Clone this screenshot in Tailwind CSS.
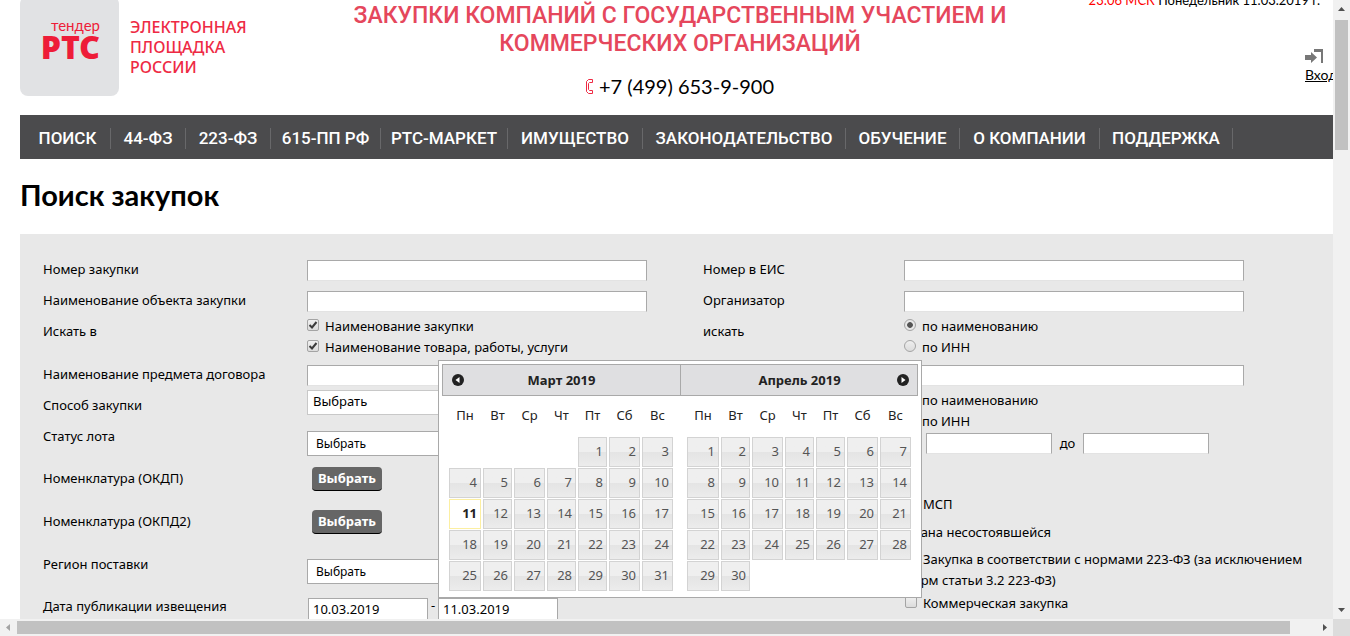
<!DOCTYPE html>
<html lang="ru">
<head>
<meta charset="utf-8">
<title>Поиск закупок</title>
<script src="https://cdn.jsdelivr.net/npm/@tailwindcss/browser@4"></script>
</head>
<body class="flex h-screen flex-col overflow-hidden bg-white font-['Noto_Sans',sans-serif] text-[13px] leading-[21px] text-black">
<div class="flex min-h-0 flex-1">
  <div class="min-w-0 flex-1 overflow-hidden">
    <div class="relative min-w-[1360px] px-5">
      <header class="flex h-[115px] justify-between">
        <a href="#" class="flex w-[300px] gap-[11px]">
          <span class="-mt-1 flex h-[100px] w-[99px] flex-col rounded-lg bg-[#e1e2e4] pt-5 pr-[19px] text-right text-[#ee1c38]">
            <span class="font-['Lato',sans-serif] text-[15px] leading-[18px]">тендер</span>
            <span class="font-['Noto_Sans',sans-serif] text-[32px] leading-[26px] font-black">РТС</span>
          </span>
          <span class="pt-[17px] text-[16px] leading-5 font-medium text-[#ee2a44]">ЭЛЕКТРОННАЯ<br>ПЛОЩАДКА<br>РОССИИ</span>
        </a>
        <div class="min-w-0 flex-1 text-center font-['Lato',sans-serif]">
          <h2 class="pt-0.5 font-['Roboto',sans-serif] text-[23px] leading-7 font-medium text-[#e5475c]">ЗАКУПКИ КОМПАНИЙ С ГОСУДАРСТВЕННЫМ УЧАСТИЕМ И<br>КОММЕРЧЕСКИХ ОРГАНИЗАЦИЙ</h2>
          <p class="flex items-center justify-center gap-1.5 pt-3.5 text-[20px] leading-7">
            <svg class="h-[15px] w-[7px]" viewBox="0 0 7 15" fill="none" stroke="#ee2a44"><path d="M2.5 .5h4v3h-3l-1 1v6l1 1h3v3h-4l-2-2v-10z"/></svg>+7 (499) 653-9-900</p>
        </div>
        <div class="-mt-2.5 w-[300px] font-['Lato',sans-serif]">
          <p class="pr-5 text-right text-[13px] leading-[21px]"><span class="text-[#f00]">23:06 МСК</span> Понедельник 11.03.2019 г.</p>
          <a href="#" class="ml-auto block w-[35px] pt-[38px] text-[14px] leading-5 underline">
            <svg class="mb-px h-[15px] w-[19px]" viewBox="0 0 19 15"><path d="M9 0h9v14h-2V3H9zM0 6h6V3l6 5.500-6 5.500v-3H0z" fill="#777"/></svg>
            Вход</a>
        </div>
      </header>
      <nav class="flex h-11 items-center bg-[#4b4b4d] pt-0.5 pl-[5px] text-center font-['Roboto',sans-serif] text-[17px] font-medium text-white *:border-r *:border-[#68686a]">
        <a href="#" class="w-[86px]">ПОИСК</a><a href="#" class="w-[75px]">44-ФЗ</a><a href="#" class="w-[85px]">223-ФЗ</a><a href="#" class="w-[110px]">615-ПП РФ</a><a href="#" class="w-[127px]">РТС-МАРКЕТ</a><a href="#" class="w-[135px]">ИМУЩЕСТВО</a><a href="#" class="w-[203px]">ЗАКОНОДАТЕЛЬСТВО</a><a href="#" class="w-[114px]">ОБУЧЕНИЕ</a><a href="#" class="w-[140px]">О КОМПАНИИ</a><a href="#" class="w-[133px]">ПОДДЕРЖКА</a>
      </nav>
      <h1 class="h-[75px] pt-[18px] font-['Lato',sans-serif] text-[29px] leading-9 font-bold">Поиск закупок</h1>

      <form class="flex bg-[#e8e8e8] pt-5 pl-[23px]">
        <div class="w-[660px] *:flex [&>*>:first-child]:w-[264px] [&>*>:first-child]:pt-[5px]">
          <div class="h-[31px]"><label for="num">Номер закупки</label><input id="num" type="text" class="mt-1.5 h-[21px] w-[340px] border border-[#a9a9a9] border-b-[#e3e3e3] bg-white px-1 outline-none"></div>
          <div class="h-[31px]"><label for="obj">Наименование объекта закупки</label><input id="obj" type="text" class="mt-1.5 h-[21px] w-[340px] border border-[#a9a9a9] border-b-[#e3e3e3] bg-white px-1 outline-none"></div>
          <div class="h-[43px]"><span>Искать в</span>
            <div>
              <label class="flex gap-1.5"><span class="relative mt-[3px] size-3"><input type="checkbox" checked class="block size-3 appearance-none rounded-xs border border-[#a4a4a4] bg-linear-to-b from-[#f0f0f0] to-[#dcdcdc]"><svg class="pointer-events-none absolute inset-0 size-3" viewBox="0 0 12 12" fill="none" stroke="#3c3c3c" stroke-width="2"><path d="M2.500 6l2.500 2.500L9.500 3"/></svg></span>Наименование закупки</label>
              <label class="flex gap-1.5"><span class="relative mt-[3px] size-3"><input type="checkbox" checked class="block size-3 appearance-none rounded-xs border border-[#a4a4a4] bg-linear-to-b from-[#f0f0f0] to-[#dcdcdc]"><svg class="pointer-events-none absolute inset-0 size-3" viewBox="0 0 12 12" fill="none" stroke="#3c3c3c" stroke-width="2"><path d="M2.500 6l2.500 2.500L9.500 3"/></svg></span>Наименование товара, работы, услуги</label>
            </div>
          </div>
          <div class="h-[31px]"><label for="subj">Наименование предмета договора</label><input id="subj" type="text" class="mt-1.5 h-[21px] w-[340px] border border-[#a9a9a9] border-b-[#e3e3e3] bg-white px-1 outline-none"></div>
          <div class="h-[31px]"><label for="way">Способ закупки</label><select id="way" class="h-[25px] w-[340px] appearance-none border border-[#c8c8c8] bg-white px-[5px] pb-0.5 leading-[21px] outline-none"><option>Выбрать</option></select></div>
          <div class="h-[42px]"><label for="status">Статус лота</label><select id="status" class="mt-2.5 h-[25px] w-[340px] appearance-none border border-[#a9a9a9] bg-white px-2 text-[12px] outline-none"><option>Выбрать</option></select></div>
          <div class="h-[43px]"><span>Номенклатура (ОКДП)</span><button type="button" class="mt-1 ml-[5px] h-6 w-[70px] rounded-sm border-b border-black bg-[#666] font-bold text-white">Выбрать</button></div>
          <div class="h-[43px]"><span>Номенклатура (ОКПД2)</span><button type="button" class="mt-1 ml-[5px] h-6 w-[70px] rounded-sm border-b border-black bg-[#666] font-bold text-white">Выбрать</button></div>
          <div class="h-[42px]"><label for="region">Регион поставки</label><select id="region" class="mt-2.5 h-[25px] w-[340px] appearance-none border border-[#a9a9a9] bg-white px-2 text-[12px] outline-none"><option>Выбрать</option></select></div>
          <div class="h-[42px]"><label for="from">Дата публикации извещения</label><input id="from" type="text" value="10.03.2019" class="mt-[7px] ml-px h-[22px] w-[120px] border border-[#a9a9a9] border-b-[#e3e3e3] bg-white px-1 outline-none"><span class="w-2.5 pt-1 text-center">-</span><input aria-label="Дата публикации по" type="text" value="11.03.2019" class="mt-[7px] h-[22px] w-[120px] border border-[#a9a9a9] border-b-[#e3e3e3] bg-white px-1 outline-none"></div>
        </div>

        <div class="min-w-0 flex-1">
          <div class="flex h-[31px]"><label for="eis" class="w-[201px] pt-[5px]">Номер в ЕИС</label><input id="eis" type="text" class="mt-1.5 h-[21px] w-[340px] border border-[#a9a9a9] border-b-[#e3e3e3] bg-white px-1 outline-none"></div>
          <div class="flex h-[31px]"><label for="org" class="w-[201px] pt-[5px]">Организатор</label><input id="org" type="text" class="mt-1.5 h-[21px] w-[340px] border border-[#a9a9a9] border-b-[#e3e3e3] bg-white px-1 outline-none"></div>
          <div class="flex h-[43px]"><span class="w-[201px] pt-[5px]">искать</span>
            <div>
              <label class="flex gap-1.5"><input type="radio" name="org" checked class="mt-[3px] size-3 appearance-none rounded-full border border-[#a4a4a4] bg-radial from-[#555] from-35% to-[#e8e8e8] to-45%">по наименованию</label>
              <label class="flex gap-1.5"><input type="radio" name="org" class="mt-[3px] size-3 appearance-none rounded-full border border-[#a4a4a4] bg-linear-to-b from-[#eee] to-[#dcdcdc]">по ИНН</label>
            </div>
          </div>
          <div class="h-[31px] pt-1.5 pl-[201px]"><input aria-label="Заказчик" type="text" class="block h-[21px] w-[340px] border border-[#a9a9a9] border-b-[#e3e3e3] bg-white px-1 outline-none"></div>
          <div class="h-[43px] pl-[201px]">
            <label class="flex gap-1.5"><input type="radio" name="cust" checked class="mt-[3px] size-3 appearance-none rounded-full border border-[#a4a4a4] bg-radial from-[#555] from-35% to-[#e8e8e8] to-45%">по наименованию</label>
            <label class="flex gap-1.5"><input type="radio" name="cust" class="mt-[3px] size-3 appearance-none rounded-full border border-[#a4a4a4] bg-linear-to-b from-[#eee] to-[#dcdcdc]">по ИНН</label>
          </div>
          <div class="flex h-[61px] pl-[223px]"><input aria-label="Цена от" type="text" class="h-[21px] w-[126px] border border-[#a9a9a9] border-b-[#e3e3e3] bg-white px-1 outline-none"><label for="pmax" class="w-[31px] text-center">до</label><input id="pmax" type="text" class="h-[21px] w-[126px] border border-[#a9a9a9] border-b-[#e3e3e3] bg-white px-1 outline-none"></div>
          <label class="ml-[202px] flex h-7 gap-1.5"><input type="checkbox" class="mt-1 size-3 appearance-none rounded-xs border border-[#a4a4a4] bg-[#e8e8e8]">МСП</label>
          <label class="flex h-[27px] w-[348px] justify-end">признана несостоявшейся</label>
          <label class="ml-[202px] block h-11 whitespace-nowrap"><input type="checkbox" class="mr-1.5 inline-block size-3 appearance-none rounded-xs border border-[#a4a4a4] bg-[#e8e8e8]">Закупка в соответствии с нормами 223-ФЗ (за исключением<br>норм статьи 3.2 223-ФЗ)</label>
          <label class="ml-[202px] flex gap-1.5"><input type="checkbox" class="mt-[3px] size-3 appearance-none rounded-xs border border-[#a4a4a4] bg-linear-to-b from-[#f0f0f0] to-[#dcdcdc]">Коммерческая закупка</label>
        </div>
      </form>

      <!-- Date picker, opened above the second date field -->
      <div class="absolute top-[360px] left-[438px] w-[484px] border border-[#a9a9a9] bg-white p-[3px] pb-1.5 text-[#222]">
        <div class="flex h-8 items-center border border-[#a9a9a9] bg-[#dfdfe1] font-bold">
          <div class="flex h-full flex-1 items-center border-r border-[#a9a9a9] pl-[9px]"><button type="button" aria-label="Назад"><svg class="size-3" viewBox="0 0 12 12"><circle cx="6" cy="6" r="6" fill="#222"/><path d="M7.500 3v6l-4-3z" fill="#fff"/></svg></button><span class="flex-1 pr-[21px] text-center">Март 2019</span></div>
          <div class="flex h-full flex-1 items-center pr-2"><span class="flex-1 pl-[21px] text-center">Апрель 2019</span><button type="button" aria-label="Вперёд"><svg class="size-3" viewBox="0 0 12 12"><circle cx="6" cy="6" r="6" fill="#222"/><path d="M4.500 3v6l4-3z" fill="#fff"/></svg></button></div>
        </div>
        <div class="flex gap-3 pl-1.5 [&_a]:block [&_a]:h-[30px] [&_a]:border [&_a]:border-[#d3d3d3] [&_a]:bg-linear-to-b [&_a]:from-[#efefef] [&_a]:from-50% [&_a]:to-[#ececec] [&_a]:via-[#e4e4e4] [&_a]:via-50% [&_a]:pr-[3px] [&_a]:text-right [&_a]:leading-[26px] [&_a]:text-[#555] [&_td]:px-px [&_td]:pt-px [&_td]:pb-0 [&_th]:h-10 [&_th]:p-0 [&_th]:pb-0.5 [&_th]:font-normal">
          <table class="w-[226px] table-fixed self-start">
            <colgroup><col class="w-[34px]"><col class="w-[31px]"><col class="w-[33px]"><col class="w-[31px]"><col class="w-[31px]"><col class="w-[33px]"><col class="w-[33px]"></colgroup>
            <thead><tr><th>Пн</th><th>Вт</th><th>Ср</th><th>Чт</th><th>Пт</th><th>Сб</th><th>Вс</th></tr></thead>
            <tbody>
              <tr><td colspan="4"></td><td><a href="#">1</a></td><td><a href="#">2</a></td><td><a href="#">3</a></td></tr>
              <tr><td><a href="#">4</a></td><td><a href="#">5</a></td><td><a href="#">6</a></td><td><a href="#">7</a></td><td><a href="#">8</a></td><td><a href="#">9</a></td><td><a href="#">10</a></td></tr>
              <tr><td><a href="#" class="border-[#fcefa1]! bg-white! bg-none! font-bold text-[#222]!">11</a></td><td><a href="#">12</a></td><td><a href="#">13</a></td><td><a href="#">14</a></td><td><a href="#">15</a></td><td><a href="#">16</a></td><td><a href="#">17</a></td></tr>
              <tr><td><a href="#">18</a></td><td><a href="#">19</a></td><td><a href="#">20</a></td><td><a href="#">21</a></td><td><a href="#">22</a></td><td><a href="#">23</a></td><td><a href="#">24</a></td></tr>
              <tr><td><a href="#">25</a></td><td><a href="#">26</a></td><td><a href="#">27</a></td><td><a href="#">28</a></td><td><a href="#">29</a></td><td><a href="#">30</a></td><td><a href="#">31</a></td></tr>
            </tbody>
          </table>
          <table class="w-[226px] table-fixed self-start">
            <colgroup><col class="w-[34px]"><col class="w-[31px]"><col class="w-[33px]"><col class="w-[31px]"><col class="w-[31px]"><col class="w-[33px]"><col class="w-[33px]"></colgroup>
            <thead><tr><th>Пн</th><th>Вт</th><th>Ср</th><th>Чт</th><th>Пт</th><th>Сб</th><th>Вс</th></tr></thead>
            <tbody>
              <tr><td><a href="#">1</a></td><td><a href="#">2</a></td><td><a href="#">3</a></td><td><a href="#">4</a></td><td><a href="#">5</a></td><td><a href="#">6</a></td><td><a href="#">7</a></td></tr>
              <tr><td><a href="#">8</a></td><td><a href="#">9</a></td><td><a href="#">10</a></td><td><a href="#">11</a></td><td><a href="#">12</a></td><td><a href="#">13</a></td><td><a href="#">14</a></td></tr>
              <tr><td><a href="#">15</a></td><td><a href="#">16</a></td><td><a href="#">17</a></td><td><a href="#">18</a></td><td><a href="#">19</a></td><td><a href="#">20</a></td><td><a href="#">21</a></td></tr>
              <tr><td><a href="#">22</a></td><td><a href="#">23</a></td><td><a href="#">24</a></td><td><a href="#">25</a></td><td><a href="#">26</a></td><td><a href="#">27</a></td><td><a href="#">28</a></td></tr>
              <tr><td><a href="#">29</a></td><td><a href="#">30</a></td><td colspan="5"></td></tr>
            </tbody>
          </table>
        </div>
      </div>
    </div>
  </div>
  <div class="flex w-[17px] flex-col items-center bg-[#f1f1f1]">
    <svg class="h-5 w-[17px] shrink-0" viewBox="0 0 17 20"><path d="M5 11l3.500-4 3.500 4z" fill="#505050"/></svg>
    <div class="h-[130px] w-[13px] bg-[#c1c1c1]"></div>
    <svg class="mt-auto h-[17px] w-[17px] shrink-0" viewBox="0 0 17 17"><path d="M5 6l3.500 4L12 6z" fill="#505050"/></svg>
  </div>
</div>
<div class="flex h-[17px] items-center bg-[#f1f1f1]">
  <svg class="size-[17px] shrink-0" viewBox="0 0 17 17"><path d="M10 5L6 8.500l4 3.500z" fill="#a3a3a3"/></svg>
  <div class="mr-[26px] h-[13px] flex-1 bg-[#c1c1c1]"></div>
  <svg class="size-[17px] shrink-0" viewBox="0 0 17 17"><path d="M7 5l4 3.500L7 12z" fill="#505050"/></svg>
  <div class="size-[17px] bg-[#dcdcdc]"></div>
</div>
</body>
</html>
